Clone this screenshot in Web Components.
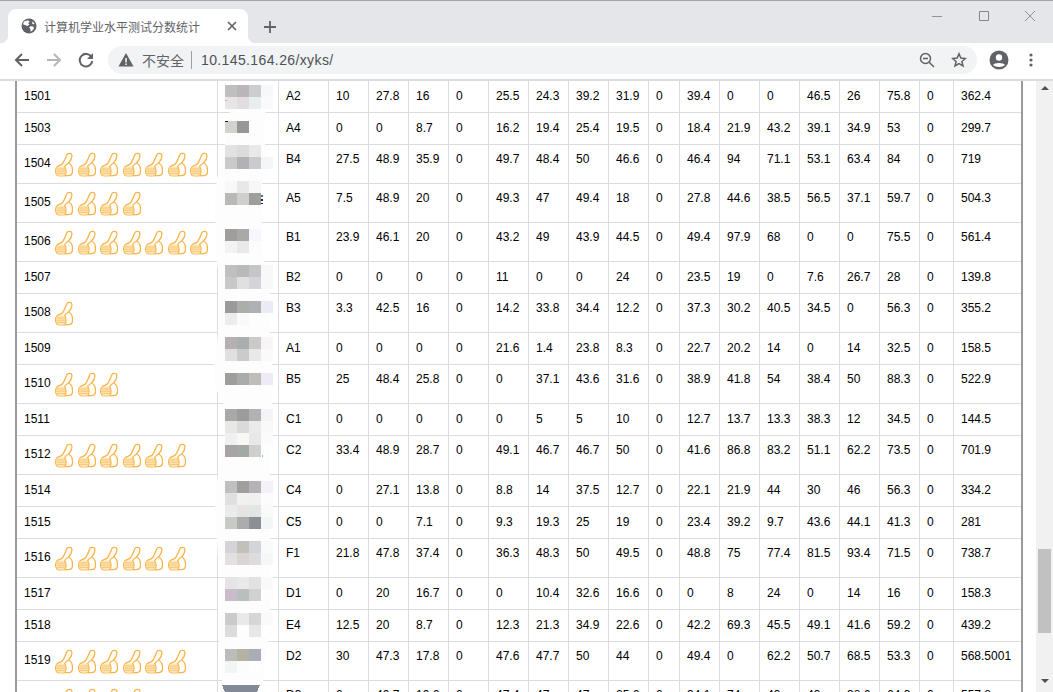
<!DOCTYPE html>
<html lang="zh">
<head>
<meta charset="utf-8">
<title>计算机学业水平测试分数统计</title>
<style>
  html, body { margin: 0; height: 100%; overflow: hidden; background: #fff; }
  body { display: flex; flex-direction: column; font-family: "Liberation Sans", "Noto Sans CJK SC", sans-serif; }
</style>
</head>
<body>
<tab-strip tab-title="计算机学业水平测试分数统计"></tab-strip>
<tool-bar url="10.145.164.26/xyks/"></tool-bar>
<page-view>
  <score-table></score-table>
  <page-scrollbar></page-scrollbar>
</page-view>

<script>
const ROWS = [
  ['1501', 0, 'A2', '10 27.8 16 0 25.5 24.3 39.2 31.9 0 39.4 0 0 46.5 26 75.8 0 362.4'],
  ['1503', 0, 'A4', '0 0 8.7 0 16.2 19.4 25.4 19.5 0 18.4 21.9 43.2 39.1 34.9 53 0 299.7'],
  ['1504', 7, 'B4', '27.5 48.9 35.9 0 49.7 48.4 50 46.6 0 46.4 94 71.1 53.1 63.4 84 0 719'],
  ['1505', 4, 'A5', '7.5 48.9 20 0 49.3 47 49.4 18 0 27.8 44.6 38.5 56.5 37.1 59.7 0 504.3'],
  ['1506', 7, 'B1', '23.9 46.1 20 0 43.2 49 43.9 44.5 0 49.4 97.9 68 0 0 75.5 0 561.4'],
  ['1507', 0, 'B2', '0 0 0 0 11 0 0 24 0 23.5 19 0 7.6 26.7 28 0 139.8'],
  ['1508', 1, 'B3', '3.3 42.5 16 0 14.2 33.8 34.4 12.2 0 37.3 30.2 40.5 34.5 0 56.3 0 355.2'],
  ['1509', 0, 'A1', '0 0 0 0 21.6 1.4 23.8 8.3 0 22.7 20.2 14 0 14 32.5 0 158.5'],
  ['1510', 3, 'B5', '25 48.4 25.8 0 0 37.1 43.6 31.6 0 38.9 41.8 54 38.4 50 88.3 0 522.9'],
  ['1511', 0, 'C1', '0 0 0 0 0 5 5 10 0 12.7 13.7 13.3 38.3 12 34.5 0 144.5'],
  ['1512', 6, 'C2', '33.4 48.9 28.7 0 49.1 46.7 46.7 50 0 41.6 86.8 83.2 51.1 62.2 73.5 0 701.9'],
  ['1514', 0, 'C4', '0 27.1 13.8 0 8.8 14 37.5 12.7 0 22.1 21.9 44 30 46 56.3 0 334.2'],
  ['1515', 0, 'C5', '0 0 7.1 0 9.3 19.3 25 19 0 23.4 39.2 9.7 43.6 44.1 41.3 0 281'],
  ['1516', 6, 'F1', '21.8 47.8 37.4 0 36.3 48.3 50 49.5 0 48.8 75 77.4 81.5 93.4 71.5 0 738.7'],
  ['1517', 0, 'D1', '0 20 16.7 0 0 10.4 32.6 16.6 0 0 8 24 0 14 16 0 158.3'],
  ['1518', 0, 'E4', '12.5 20 8.7 0 12.3 21.3 34.9 22.6 0 42.2 69.3 45.5 49.1 41.6 59.2 0 439.2'],
  ['1519', 6, 'D2', '30 47.3 17.8 0 47.6 47.7 50 44 0 49.4 0 62.2 50.7 68.5 53.3 0 568.5001'],
  ['1520', 4, 'D3', '0 40.7 10.6 0 47.4 47 47 25.6 0 34.1 74 43 43 38.6 64.3 0 557.8'],
];

const COL_WIDTHS = [201, 61, 50, 40, 40, 40, 40, 40, 40, 40, 40, 31, 40, 40, 40, 40, 40, 40, 34, 67];

// [y, colours left to right], blocks are 12px, first one at x=225
const MOSAIC = [
  [85, '#bfbfbf #b9b5b9 #cccdd0 #f7f8fa'],
  [97, '#e6e6e6 #e2dde0 #e8eeee #f8fafb'],
  [121, '#d2d3cf #979795'],
  [145, '#e2e2e2 #dcdcdc #e9e9e7'],
  [157, '#cacaca #b3b1b3 #c8cccf #f5f6f8'],
  [181, '#f8f8f8 #e8e8e8 #f7f7f7'],
  [193, '#b8bab6 #cfcfcf #9e9e9a'],
  [229, '#a09e9d #a9a9a7 #f5f7fc'],
  [241, '#f3f3f3 #e9e9e9 #fcfcff'],
  [265, '#c0bec0 #b6babb #c8c5c7 #f8f8f8'],
  [277, '#c8c8c8 #e0e0e0 #d5d4da #f8f8f8'],
  [301, '#9a9a9a #acaea8 #adb1b3 #ebecf3'],
  [313, '#ededed #fafafa #fefefe'],
  [337, '#b5b0b2 #a9afaf #ccc9c9 #f8f5f7'],
  [349, '#e0e0de #cbcbcd #e8eae9 #fafafa'],
  [373, '#9f9e9c #aaacab #c0bcb8 #eeebf6'],
  [409, '#aaa9a9 #9c9c9c #b2b2b2 #f3f3f8'],
  [421, '#e8e8e6 #dadada #eaeaea #f9f9f9'],
  [433, '#f0f0f0 #f7f7f3 #e8e8e8 #fbfbfb'],
  [445, '#a8a3a6 #a1aaa3 #cfcfcf'],
  [481, '#c0c0c0 #a09f9e #b5b3b5 #f4f2f8'],
  [493, '#e0e0e0 #f1f1f1 #f0f0f0 #fcfcfc'],
  [505, '#eaebec #e6e3e1 #e2e5e5 #fafafa'],
  [517, '#c7cac5 #acabad #8b8f96 #f2f6f7'],
  [541, '#d5d3d7 #c2c1b9 #d3d4d9 #fafafa'],
  [553, '#e4dfe1 #d8d5d3 #dddbde #f5f7f9'],
  [577, '#e6e3e5 #e9e9e7 #e2e2e4 #fafafa'],
  [589, '#c9bdc9 #b9bfbf #d1d1d1 #fdfdfd'],
  [613, '#cbcbc9 #e9e9eb #d6d6d6 #fafafa'],
  [625, '#dcdcdc #fdfdfd #e6e8e5 #fefefe'],
  [649, '#bcbcbc #b5b2a3 #a9adb7'],
  [661, '#f2f5f4 #fcfcfc #fefefe'],
];

const BLOB = '225,81 224,100 230,112 227,125 225,144 222,165 217,178 215,200 216,255 218,270 218,332 217,345 214,364 214,385 223,403 225,420 225,435 218,474 216,490 215,510 217,538 218,560 225,577 225,590 218,609 218,630 219,641 222,680 224,692 '
  + '262,692 263,680 265,660 268,641 270,609 270,474 270,450 267,435 268,420 272,403 272,364 270,332 268,300 270,293 270,265 262,260 262,181 267,170 268,160 265,144 263,130 266,112 268,90 262,81';

class TabStrip extends HTMLElement {
  shadowRoot = this.attachShadow({ mode: 'open' });

  connectedCallback() {
    const title = this.getAttribute('tab-title') || '';
    this.shadowRoot.innerHTML = `
      <style>
        :host {
          display: flex;
          align-items: flex-end;
          flex: none;
          box-sizing: border-box;
          height: 43px;
          padding-left: 8px;
          background: #e4e6e9;
          border-top: 1px solid #a3a3a3;
          font-size: 12px;
        }
        .tab {
          position: relative;
          display: flex;
          align-items: center;
          box-sizing: border-box;
          width: 240px;
          height: 34px;
          padding-left: 13px;
          background: #fff;
          border-radius: 8px 8px 0 0;
          color: #5f6368;
        }
        .tab::before, .tab::after {
          content: "";
          position: absolute;
          bottom: 0;
          width: 8px;
          height: 8px;
        }
        .tab::before { left: -8px; background: radial-gradient(circle at 0 0, #e4e6e9 8px, #fff 8.5px); }
        .tab::after { right: -8px; background: radial-gradient(circle at 100% 0, #e4e6e9 8px, #fff 8.5px); }
        .favicon { width: 16px; height: 16px; margin-right: 7px; flex: none; }
        .title { flex: 1; white-space: nowrap; overflow: hidden; }
        .close { width: 12px; height: 12px; margin-right: 10px; flex: none; }
        .plus { width: 14px; height: 14px; margin: 0 0 9px 15px; flex: none; }
        .controls { display: flex; margin-left: auto; align-self: flex-start; }
        .controls svg { display: block; width: 12px; height: 12px; }
        .controls svg:nth-child(1) { margin: 9px 35px 0 0; }
        .controls svg:nth-child(2) { margin: 9px 34px 0 0; }
        .controls svg:nth-child(3) { margin: 9px 17px 0 0; }
      </style>
      <div class="tab">
        <svg class="favicon" viewBox="0 0 16 16">
          <circle cx="8" cy="8" r="7.5" fill="#5f6368"/>
          <path d="M3 3.6 7 2.3 8.6 3.4 7.2 5.2 8.4 6.6 6.4 8 4.6 7.2 2 6.3ZM9.2 8.2 12.4 8.6 13 10.6 11 13 9.6 13.4 9.4 11 8.2 9.6ZM11.6 3.4 13.6 5.6 12.6 6.4 11 5.4Z" fill="#fff"/>
        </svg>
        <span class="title">${title}</span>
        <svg class="close" viewBox="0 0 12 12"><path d="M2 2 10 10M10 2 2 10" stroke="#5f6368" stroke-width="1.7" fill="none"/></svg>
      </div>
      <svg class="plus" viewBox="0 0 14 14"><path d="M7 1V13M1 7H13" stroke="#5f6368" stroke-width="1.8" fill="none"/></svg>
      <div class="controls">
        <svg viewBox="0 0 12 12"><path d="M1 6.5H11" stroke="#909397"/></svg>
        <svg viewBox="0 0 12 12"><path d="M1.5 1.5H10.5V10.5H1.5Z" stroke="#85888c" fill="none"/></svg>
        <svg viewBox="0 0 12 12"><path d="M1 1 11 11M11 1 1 11" stroke="#909397" fill="none"/></svg>
      </div>
    `;
  }
}

class ToolBar extends HTMLElement {
  shadowRoot = this.attachShadow({ mode: 'open' });

  connectedCallback() {
    const url = this.getAttribute('url') || '';
    this.shadowRoot.innerHTML = `
      <style>
        :host {
          display: flex;
          align-items: center;
          flex: none;
          box-sizing: border-box;
          height: 38px;
          padding: 0 0 2px 0;
          background: #fff;
          border-bottom: 2px solid #dadce0;
        }
        svg { display: block; flex: none; }
        .nav { width: 16px; height: 16px; margin-left: 14px; margin-right: 16px; }
        .nav + .nav { margin-left: 0; }
        .omnibox {
          display: flex;
          align-items: center;
          flex: none;
          box-sizing: border-box;
          width: 869px;
          height: 28px;
          margin-left: -2px;
          padding-left: 10px;
          background: #f1f3f4;
          border-radius: 14px;
        }
        .warn { width: 16px; height: 16px; margin-right: 8px; }
        .secure { font-size: 14px; color: #5f6368; }
        .sep { width: 1px; height: 18px; margin: 0 9px 0 7px; background: #9aa0a6; }
        .url { font-size: 14px; letter-spacing: .38px; color: #4d5156; white-space: nowrap; flex: 1; }
        .zoom { width: 16px; height: 16px; margin-right: 16px; }
        .star { width: 16px; height: 16px; margin-right: 10px; }
        .avatar { width: 20px; height: 20px; margin-left: 12px; }
        .dots { width: 4px; height: 14px; margin-left: 20px; }
      </style>
      <svg class="nav" viewBox="0 0 16 16"><path d="M15 8H2.5M8 2 2 8 8 14" stroke="#5f6368" stroke-width="2" fill="none"/></svg>
      <svg class="nav" viewBox="0 0 16 16"><path d="M1 8H13.5M8 2 14 8 8 14" stroke="#b4b6b9" stroke-width="2" fill="none"/></svg>
      <svg class="nav" viewBox="0 0 16 16"><path d="M13.6 5.2A6.3 6.3 0 1 0 14.3 9" stroke="#5f6368" stroke-width="2" fill="none"/><path d="M15 1V7H9Z" fill="#5f6368"/></svg>
      <div class="omnibox">
        <svg class="warn" viewBox="0 0 16 16"><path d="M8 1 15.5 14.5H.5Z" fill="#5f6368"/><path d="M7.2 6H8.8V10.4H7.2ZM7.2 11.4H8.8V13H7.2Z" fill="#f1f3f4"/></svg>
        <span class="secure">不安全</span>
        <span class="sep"></span>
        <span class="url">${url}</span>
        <svg class="zoom" viewBox="0 0 16 16"><circle cx="6.5" cy="6.5" r="5" stroke="#5f6368" stroke-width="1.5" fill="none"/><path d="M4 6.5H9M10.2 10.2 15 15" stroke="#5f6368" stroke-width="1.5" fill="none"/></svg>
        <svg class="star" viewBox="0 0 16 16"><path d="M8 1.8 9.8 6.1 14.4 6.5 10.9 9.5 12 14 8 11.6 4 14 5.1 9.5 1.6 6.5 6.2 6.1Z" stroke="#5f6368" stroke-width="1.5" fill="none"/></svg>
      </div>
      <svg class="avatar" viewBox="0 0 20 20"><circle cx="10" cy="10" r="9.5" fill="#5f6368"/><circle cx="10" cy="7.5" r="3.2" fill="#fff"/><path d="M4 15C5 12.2 15 12.2 16 15 13.5 17.6 6.5 17.6 4 15Z" fill="#fff"/></svg>
      <svg class="dots" viewBox="0 0 4 14"><circle cx="2" cy="2" r="1.6" fill="#5f6368"/><circle cx="2" cy="7" r="1.6" fill="#5f6368"/><circle cx="2" cy="12" r="1.6" fill="#5f6368"/></svg>
    `;
  }
}

class PageView extends HTMLElement {
  shadowRoot = this.attachShadow({ mode: 'open' });

  connectedCallback() {
    this.shadowRoot.innerHTML = `
      <style>
        :host { display: flex; flex: 1; min-height: 0; overflow: hidden; }
      </style>
      <slot></slot>
    `;
  }
}

class ThumbIcon extends HTMLElement {
  shadowRoot = this.attachShadow({ mode: 'open' });

  connectedCallback() {
    this.shadowRoot.innerHTML = `
      <style>
        :host { display: inline-block; width: 19.17px; height: 26px; vertical-align: middle; }
        svg { display: block; width: 100%; height: 100%; }
      </style>
      <svg viewBox="0 0 19.17 26">
        <path d="M3 16C4.5 14.2 7 14.6 8.3 13 10.2 10.8 11.2 8 12.6 4.2 13.4 2 17.6 1.7 17.9 4.2 18.2 7 16.6 10 14.6 12 17 13 18.6 16 18.6 20 18.6 23 17 24.7 14.5 24.7L6 24.9C3 24.9 1.6 23 1.6 20 1.6 18 2 17 3 16Z" fill="#fffdf6" stroke="#f8b44c" stroke-width="1.3" stroke-linejoin="round"/>
        <path d="M3 16.2C5 15.4 9 15.2 10.6 15.6 12.4 18.4 12.4 22.4 10.8 24.6L6 24.8C3.2 24.8 2 23 2 20 2 18.4 2.3 17.2 3 16.2Z" fill="#fde6b4"/>
        <path d="M2.4 18H11.6M2.2 20.2H11.9M2.5 22.4H11.6" stroke="#f6bd68" stroke-width=".8"/>
        <path d="M14.6 12C13 13 11.4 14 10.6 15.4 12.6 18.2 12.6 22.4 10.8 24.7" fill="none" stroke="#f8b44c" stroke-width="1.1"/>
      </svg>
    `;
  }
}

class ScoreTable extends HTMLElement {
  shadowRoot = this.attachShadow({ mode: 'open' });

  connectedCallback() {
    this.render();
  }

  render() {
    const cols = COL_WIDTHS.map((w) => `<col style="width:${w}px">`).join('');
    const rows = ROWS.map(([id, thumbs, cls, scores]) => {
      const icons = Array(thumbs).fill('<thumb-icon></thumb-icon>').join(' ');
      const cells = scores.split(' ').map((s) => `<td>${s}</td>`).join('');
      return `<tr class="${thumbs ? 'tall' : ''}"><td class="id">${id} ${icons}</td><td></td><td>${cls}</td>${cells}</tr>`;
    }).join('');

    this.shadowRoot.innerHTML = `
      <style>
        :host {
          display: block;
          position: relative;
          flex: 1;
          min-width: 0;
          padding-left: 15px;
          overflow: hidden;
          font: 12px/15px "Liberation Sans", "Noto Sans CJK SC", sans-serif;
          color: #000;
        }
        table {
          table-layout: fixed;
          width: 1008px;
          border-collapse: separate;
          border-spacing: 0;
          border-left: 2px solid #9a9a9a;
          border-right: 2px solid #9a9a9a;
        }
        td {
          box-sizing: border-box;
          height: 32px;
          padding: 8px 0 0 7px;
          vertical-align: top;
          border-right: 1px solid #dcdcdc;
          border-bottom: 1px solid #dcdcdc;
          white-space: nowrap;
        }
        td:last-child { border-right: 0; }
        .tall td { height: 39px; padding-top: 7px; }
        .tall .id { padding-top: 0; vertical-align: middle; }
        .id { white-space: nowrap; }
      </style>
      <table><colgroup>${cols}</colgroup>${rows}</table>
      <redact-mask></redact-mask>
    `;
  }
}

class RedactMask extends HTMLElement {
  shadowRoot = this.attachShadow({ mode: 'open' });

  connectedCallback() {
    const blocks = MOSAIC.map(([y, colours]) => colours.split(' ')
      .map((c, i) => `<rect x="${225 + i * 12}" y="${y}" width="12" height="12" fill="${c}"/>`).join('')).join('');

    this.shadowRoot.innerHTML = `
      <style>
        :host { position: absolute; left: 0; top: 0; width: 280px; height: 611px; pointer-events: none; }
        svg { display: block; }
      </style>
      <svg width="280" height="611" viewBox="0 81 280 611" shape-rendering="crispEdges">
        <polygon points="${BLOB}" fill="#fdfdfd" shape-rendering="auto"/>
        ${blocks}
        <polygon points="222,685 260,685 257,692 225,692" fill="#828a98"/>
        <rect x="225" y="100" width="2" height="1" fill="#f0a860"/>
        <rect x="225" y="121" width="3" height="1" fill="#222"/>
        <rect x="261" y="195" width="2" height="2" fill="#3a6ea8"/>
        <rect x="261" y="199" width="2" height="2" fill="#223"/>
        <rect x="261" y="203" width="2" height="1" fill="#223"/>
        <rect x="262" y="455" width="1" height="2" fill="#7cc4ee"/>
      </svg>
    `;
  }
}

class PageScrollbar extends HTMLElement {
  shadowRoot = this.attachShadow({ mode: 'open' });

  connectedCallback() {
    this.shadowRoot.innerHTML = `
      <style>
        :host {
          display: flex;
          flex-direction: column;
          align-items: center;
          flex: none;
          box-sizing: border-box;
          width: 17px;
          padding-top: 5px;
          background: #f1f1f1;
        }
        .arrow { width: 0; height: 0; border-left: 4px solid transparent; border-right: 4px solid transparent; }
        .up { border-bottom: 4px solid #505050; }
        .down { border-top: 4px solid #505050; margin-top: 46px; }
        .thumb { width: 13px; height: 84px; margin-top: 459px; background: #c1c1c1; }
      </style>
      <div class="arrow up"></div>
      <div class="thumb"></div>
      <div class="arrow down"></div>
    `;
  }
}

customElements.define('thumb-icon', ThumbIcon);
customElements.define('redact-mask', RedactMask);
customElements.define('tab-strip', TabStrip);
customElements.define('tool-bar', ToolBar);
customElements.define('page-view', PageView);
customElements.define('score-table', ScoreTable);
customElements.define('page-scrollbar', PageScrollbar);
</script>
</body>
</html>
